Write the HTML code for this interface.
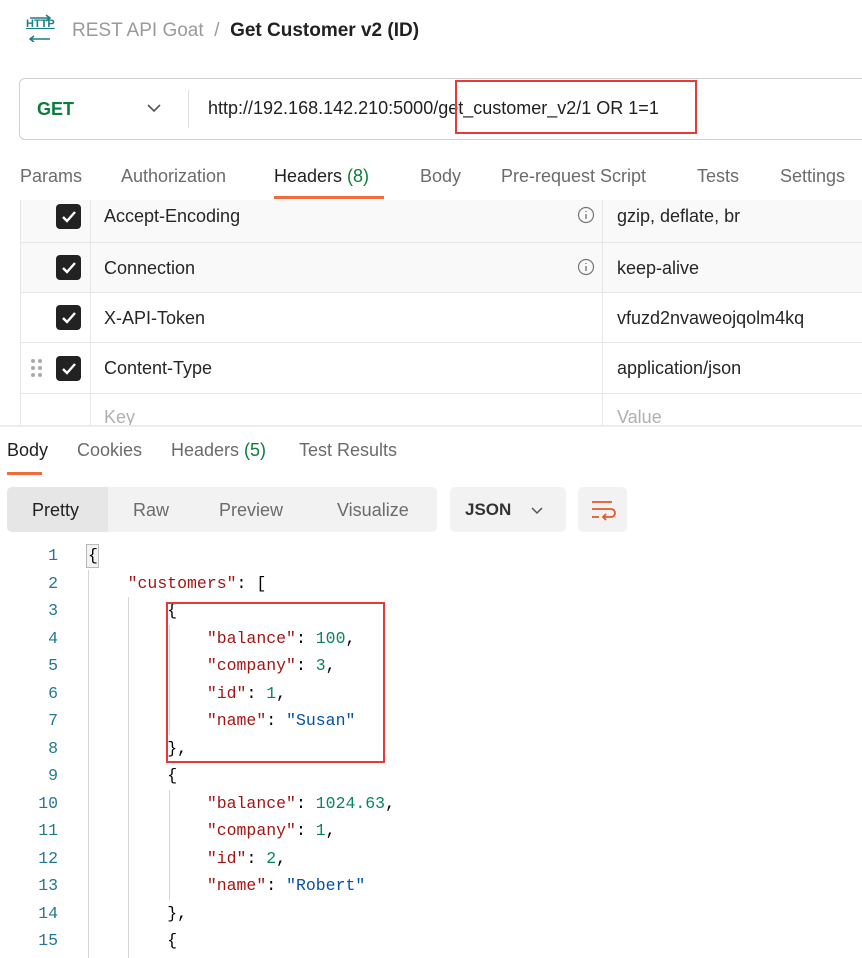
<!DOCTYPE html>
<html><head><meta charset="utf-8"><style>
*{margin:0;padding:0;box-sizing:border-box}
body{width:862px;height:958px;background:#fff;font-family:"Liberation Sans",sans-serif;position:relative;overflow:hidden;color:#212121}
.a{position:absolute;white-space:nowrap}
.tab{font-size:18px;color:#6b6b6b}
.row{position:absolute;left:20px;width:842px;border-bottom:1px solid #e6e6e6}
.cb{position:absolute;left:56px;width:25px;height:25px;background:#222;border-radius:4px}
.cb svg{position:absolute;left:4px;top:4px}
.cell{position:absolute;font-size:18px;color:#262626}
.code{font-family:"Liberation Mono",monospace;font-size:16.5px;position:absolute;white-space:pre;line-height:27.5px}
.k{color:#a31515}.n{color:#098658}.s{color:#0451a5}
</style></head><body>
<!-- header -->
<div class="a" style="left:26px;top:18px;font-size:11px;font-weight:bold;color:#1c7c89;text-decoration:underline">HTTP</div>
<svg class="a" style="left:26px;top:14px" width="28" height="28"><path d="M4 4h20M20 1l4 3-4 3M4 25h20M8 22l-4 3 4 3" stroke="#1c7c89" stroke-width="1.5" fill="none"/></svg>
<div class="a" style="left:72px;top:20px;font-size:19px;color:#9a9a9a">REST API Goat &nbsp;/&nbsp; <span style="color:#212121;font-weight:bold">Get Customer v2 (ID)</span></div>
<!-- URL bar -->
<div class="a" style="left:19px;top:78px;width:850px;height:62px;border:1px solid #cfcfcf;border-radius:6px"></div>
<div class="a" style="left:37px;top:99px;font-size:18px;font-weight:bold;color:#0a7d3a">GET</div>
<svg class="a" style="left:146px;top:103px" width="16" height="10"><path d="M2 2l6 6 6-6" stroke="#555" stroke-width="1.6" fill="none"/></svg>
<div class="a" style="left:188px;top:90px;width:1px;height:38px;background:#e0e0e0"></div>
<div class="a" style="left:208px;top:98px;font-size:18px;color:#212121">http://192.168.142.210:5000/get_customer_v2/1 OR 1=1</div>
<div class="a" style="left:455px;top:80px;width:242px;height:54px;border:2px solid #e63a3a"></div>
<!-- tabs -->
<div class="a tab" style="left:20px;top:166px">Params</div>
<div class="a tab" style="left:121px;top:166px">Authorization</div>
<div class="a tab" style="left:274px;top:166px;color:#212121">Headers <span style="color:#0a7d3a">(8)</span></div>
<div class="a" style="left:274px;top:196px;width:110px;height:3px;background:#f26b3a"></div>
<div class="a tab" style="left:420px;top:166px">Body</div>
<div class="a tab" style="left:501px;top:166px">Pre-request Script</div>
<div class="a tab" style="left:697px;top:166px">Tests</div>
<div class="a tab" style="left:780px;top:166px">Settings</div>
<!-- table -->
<div class="row" style="top:200px;height:43px;background:#f9f9f9"></div>
<div class="row" style="top:243px;height:50px;background:#f9f9f9"></div>
<div class="row" style="top:293px;height:50px"></div>
<div class="row" style="top:343px;height:51px"></div>
<div class="a" style="left:20px;top:200px;width:1px;height:225px;background:#e6e6e6"></div>
<div class="a" style="left:90px;top:200px;width:1px;height:225px;background:#e6e6e6"></div>
<div class="a" style="left:602px;top:200px;width:1px;height:225px;background:#e6e6e6"></div>
<div class="cb" style="top:204px"><svg width="17" height="17"><path d="M3 9l4 4 8-9" stroke="#fff" stroke-width="2.4" fill="none"/></svg></div>
<div class="cb" style="top:255px"><svg width="17" height="17"><path d="M3 9l4 4 8-9" stroke="#fff" stroke-width="2.4" fill="none"/></svg></div>
<div class="cb" style="top:305px"><svg width="17" height="17"><path d="M3 9l4 4 8-9" stroke="#fff" stroke-width="2.4" fill="none"/></svg></div>
<div class="cb" style="top:356px"><svg width="17" height="17"><path d="M3 9l4 4 8-9" stroke="#fff" stroke-width="2.4" fill="none"/></svg></div>
<svg class="a" style="left:30px;top:358px" width="14" height="22"><g fill="#aaa"><circle cx="3" cy="3" r="2"/><circle cx="10" cy="3" r="2"/><circle cx="3" cy="10" r="2"/><circle cx="10" cy="10" r="2"/><circle cx="3" cy="17" r="2"/><circle cx="10" cy="17" r="2"/></g></svg>
<div class="cell" style="left:104px;top:206px">Accept-Encoding</div>
<div class="cell" style="left:104px;top:258px">Connection</div>
<div class="cell" style="left:104px;top:308px">X-API-Token</div>
<div class="cell" style="left:104px;top:358px">Content-Type</div>
<div class="cell" style="left:104px;top:407px;color:#b0b0b0">Key</div>
<div class="cell" style="left:617px;top:206px">gzip, deflate, br</div>
<div class="cell" style="left:617px;top:258px">keep-alive</div>
<div class="cell" style="left:617px;top:308px">vfuzd2nvaweojqolm4kq</div>
<div class="cell" style="left:617px;top:358px">application/json</div>
<div class="cell" style="left:617px;top:407px;color:#b0b0b0">Value</div>
<svg class="a" style="left:577px;top:206px" width="18" height="18"><circle cx="9" cy="9" r="7.5" stroke="#777" fill="none" stroke-width="1.2"/><path d="M9 8v5M9 5v1" stroke="#777" stroke-width="1.4"/></svg>
<svg class="a" style="left:577px;top:258px" width="18" height="18"><circle cx="9" cy="9" r="7.5" stroke="#777" fill="none" stroke-width="1.2"/><path d="M9 8v5M9 5v1" stroke="#777" stroke-width="1.4"/></svg>
<div class="a" style="left:0;top:425px;width:862px;height:2px;background:#ececec"></div>
<!-- response tabs -->
<div class="a tab" style="left:7px;top:440px;color:#212121">Body</div>
<div class="a" style="left:7px;top:472px;width:35px;height:3px;background:#f26b3a"></div>
<div class="a tab" style="left:77px;top:440px">Cookies</div>
<div class="a tab" style="left:171px;top:440px">Headers <span style="color:#0a7d3a">(5)</span></div>
<div class="a tab" style="left:299px;top:440px">Test Results</div>
<div class="a" style="left:7px;top:487px;width:430px;height:45px;background:#f2f2f2;border-radius:5px"></div>
<div class="a" style="left:7px;top:487px;width:101px;height:45px;background:#e6e6e6;border-radius:5px 0 0 5px"></div>
<div class="a" style="left:32px;top:500px;font-size:18px;color:#212121">Pretty</div>
<div class="a tab" style="left:133px;top:500px">Raw</div>
<div class="a tab" style="left:219px;top:500px">Preview</div>
<div class="a tab" style="left:337px;top:500px">Visualize</div>
<div class="a" style="left:450px;top:487px;width:116px;height:45px;background:#f2f2f2;border-radius:5px"></div>
<div class="a" style="left:465px;top:500px;font-size:17px;font-weight:bold;color:#333">JSON</div>
<svg class="a" style="left:530px;top:506px" width="14" height="9"><path d="M2 2l5 5 5-5" stroke="#555" stroke-width="1.5" fill="none"/></svg>
<div class="a" style="left:578px;top:487px;width:49px;height:45px;background:#f2f2f2;border-radius:5px"></div>
<svg class="a" style="left:590px;top:499px" width="26" height="22"><path d="M2 3h20M2 10h19a4 4 0 0 1 0 8h-8M16 15l-3 3 3 3M2 18h7" stroke="#e2582c" stroke-width="1.8" fill="none"/></svg>
<!-- code -->
<div class="code" style="left:20px;top:542px;width:38px;text-align:right;color:#237893">1
2
3
4
5
6
7
8
9
10
11
12
13
14
15</div>
<div class="a" style="left:88px;top:570px;width:1px;height:388px;background:#d6d6d6"></div>
<div class="a" style="left:128px;top:597px;width:1px;height:361px;background:#d6d6d6"></div>
<div class="a" style="left:169px;top:625px;width:1px;height:110px;background:#d6d6d6"></div>
<div class="a" style="left:169px;top:790px;width:1px;height:110px;background:#d6d6d6"></div>
<div class="a" style="left:86px;top:544px;width:13px;height:24px;border:1px solid #b9b9b9;background:#f3f3f3"></div>
<div class="code" style="left:88px;top:542px;color:#000">{
    <span class="k">"customers"</span>: [
        {
            <span class="k">"balance"</span>: <span class="n">100</span>,
            <span class="k">"company"</span>: <span class="n">3</span>,
            <span class="k">"id"</span>: <span class="n">1</span>,
            <span class="k">"name"</span>: <span class="s">"Susan"</span>
        },
        {
            <span class="k">"balance"</span>: <span class="n">1024.63</span>,
            <span class="k">"company"</span>: <span class="n">1</span>,
            <span class="k">"id"</span>: <span class="n">2</span>,
            <span class="k">"name"</span>: <span class="s">"Robert"</span>
        },
        {</div>
<div class="a" style="left:166px;top:602px;width:219px;height:161px;border:2px solid #e63a3a"></div>
</body></html>
